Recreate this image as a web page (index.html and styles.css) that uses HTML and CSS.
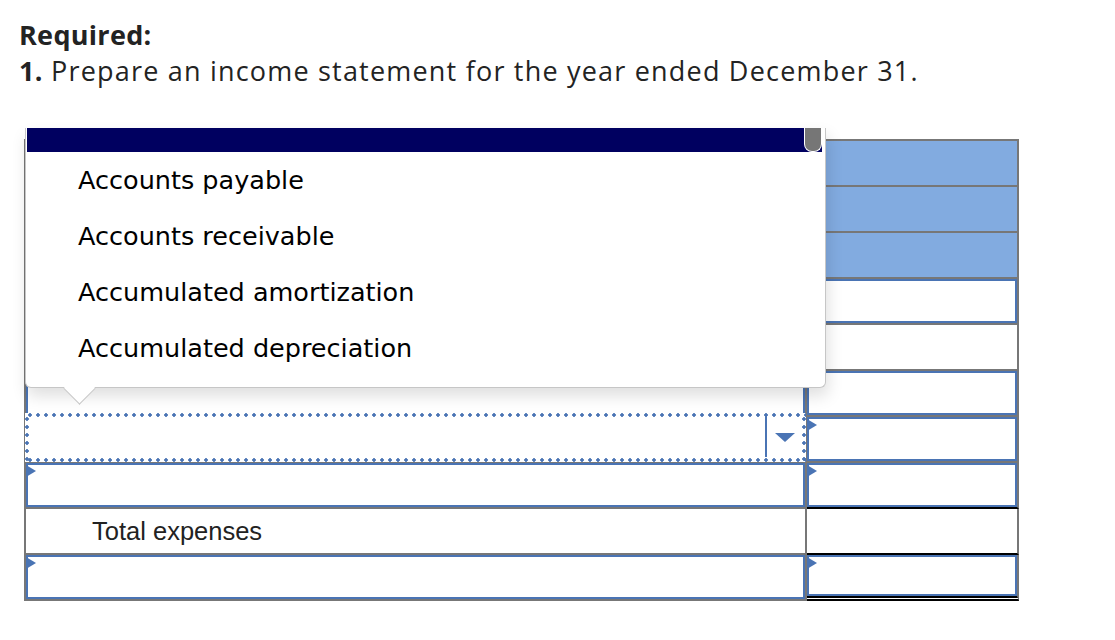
FILE: index.html
```html
<!DOCTYPE html>
<html>
<head>
<meta charset="utf-8">
<link rel="stylesheet" href="styles.css">
</head>
<body>
<div class="page">
  <div class="req">
    <p class="req-title">Required:</p>
    <p class="req-text"><b>1.</b> Prepare an income statement for the year ended December 31.</p>
  </div>
  <div class="sheet">
    <div class="cell"></div><div class="cell blue"></div>
    <div class="cell"></div><div class="cell blue"></div>
    <div class="cell"></div><div class="cell blue"></div>
    <div class="cell"><div class="inp"></div></div><div class="cell"><div class="inp"></div></div>
    <div class="cell"><div class="inp"></div></div><div class="cell"></div>
    <div class="cell"><div class="inp"></div></div><div class="cell"><div class="inp"></div></div>
    <div class="cell"><div class="sel"><div class="sel-field"></div><div class="sel-btn"><span class="arrow"></span></div></div></div><div class="cell"><div class="inp"><span class="mark"></span></div></div>
    <div class="cell"><div class="inp"><span class="mark"></span></div></div><div class="cell line-below"><div class="inp"><span class="mark"></span></div></div>
    <div class="cell label">Total expenses</div><div class="cell line-below"></div>
    <div class="cell"><div class="inp"><span class="mark"></span></div></div><div class="cell double-below"><div class="inp"><span class="mark"></span></div></div>
  </div>
  <div class="popup">
    <div class="pop-current"></div>
    <div class="pop-thumb"></div>
    <ul class="pop-list">
      <li>Accounts payable</li>
      <li>Accounts receivable</li>
      <li>Accumulated amortization</li>
      <li>Accumulated depreciation</li>
    </ul>
    <div class="pop-tip"></div>
  </div>
</div>
</body>
</html>
```

FILE: styles.css
```css
html, body {
  margin: 0;
  padding: 0;
  background: #fff;
}
.page {
  position: relative;
  width: 1115px;
  height: 640px;
  overflow: hidden;
  font-family: "Open Sans", Lato, sans-serif;
  color: #232323;
}
.req {
  padding: 17px 0 0 19px;
}
.req p {
  margin: 0;
  font-size: 27px;
  line-height: 36px;
  letter-spacing: 1.2px;
}
.req p.req-title {
  font-weight: 700;
  letter-spacing: 0.3px;
}
.req-text b {
  font-weight: 700;
  letter-spacing: 0.3px;
}
.sheet {
  margin: 50px 0 0 24px;
  display: grid;
  grid-template-columns: 781px 212px;
  grid-auto-rows: 46px;
  width: 993px;
  border-top: 2px solid #777;
  border-left: 2px solid #777;
}
.cell {
  position: relative;
  box-sizing: border-box;
  border-right: 2px solid #777;
  border-bottom: 2px solid #777;
  background: #fff;
}
.cell.blue {
  background: #82abe0;
}
.cell.line-below {
  border-bottom-color: #000;
}
.cell.double-below {
  border-bottom: 5px double #000;
}
.inp {
  position: relative;
  box-sizing: border-box;
  height: 100%;
  border: 2px solid #4a74b4;
  background: #fff;
}
.mark {
  position: absolute;
  left: -2px;
  top: 0;
  width: 0;
  height: 0;
  border-top: 6.5px solid transparent;
  border-bottom: 6.5px solid transparent;
  border-left: 10px solid #4a74b4;
}
.sel {
  box-sizing: border-box;
  height: 49px;
  margin: -4px -1px 0 -1px;
  padding: 3px;
  background-color: #fff;
  background-image:
    radial-gradient(circle, #4a74b4 1.5px, transparent 2px),
    radial-gradient(circle, #4a74b4 1.5px, transparent 2px),
    radial-gradient(circle, #4a74b4 1.5px, transparent 2px),
    radial-gradient(circle, #4a74b4 1.5px, transparent 2px);
  background-size: 8px 4px, 8px 4px, 4px 8px, 4px 8px;
  background-repeat: repeat-x, repeat-x, repeat-y, repeat-y;
  background-position: 1px 0, 1px 100%, 0 2px, 100% 2px;
  display: flex;
  position: relative;
  z-index: 1;
}
.sel-field {
  flex: 1;
}
.sel-btn {
  width: 36px;
  margin: 0 0 2px;
  border-left: 2px solid #4a74b4;
  display: flex;
  align-items: center;
  justify-content: center;
}
.arrow {
  width: 0;
  height: 0;
  border-left: 10px solid transparent;
  border-right: 10px solid transparent;
  border-top: 9px solid #4a74b4;
  margin-top: 2px;
}
.label {
  display: flex;
  align-items: center;
  padding-left: 66px;
  font-family: "Liberation Sans", Arial, sans-serif;
  font-size: 25.5px;
  color: #222;
}
.popup {
  position: absolute;
  left: 25px;
  top: 128px;
  width: 801px;
  height: 260px;
  box-sizing: border-box;
  background: #fff;
  border: 1px solid #c6c6c6;
  border-top: none;
  border-radius: 0 0 6px 6px;
  box-shadow: 2px 8px 16px rgba(0, 0, 0, 0.13);
  z-index: 5;
  font-family: "DejaVu Sans", Verdana, sans-serif;
  color: #000;
}
.pop-current {
  height: 24px;
  margin: 0 3px 0 1px;
  background: #000060;
}
.pop-thumb {
  position: absolute;
  left: 778px;
  top: 0;
  width: 16px;
  height: 23px;
  background: #767676;
  border: 1px solid #fff;
  border-top: none;
  border-radius: 0 0 8px 8px;
}
.pop-list {
  list-style: none;
  margin: 0;
  padding: 0 0 0 52px;
}
.pop-list li {
  height: 56px;
  line-height: 56px;
  font-size: 25.5px;
  white-space: nowrap;
}
.pop-tip {
  position: absolute;
  left: 42px;
  top: 249px;
  width: 22px;
  height: 22px;
  background: #fff;
  border-right: 1px solid #c6c6c6;
  border-bottom: 1px solid #c6c6c6;
  transform: rotate(45deg);
}
```
